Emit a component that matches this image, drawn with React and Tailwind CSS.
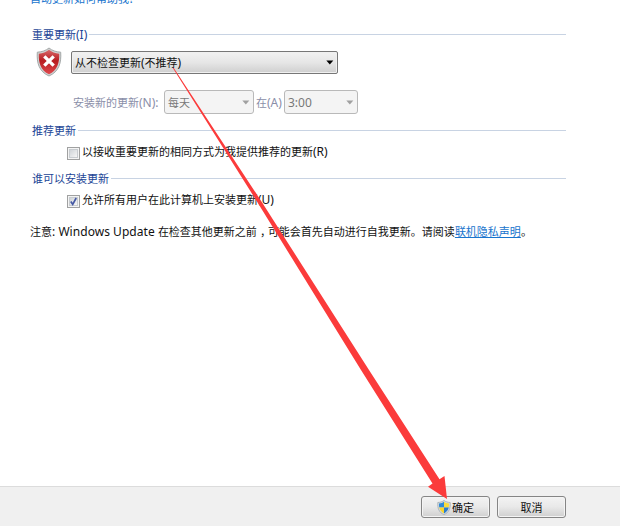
import React, { useState } from 'react';

// Latin glyphs run slightly larger than the Chinese ones
const En = ({ children }) => <span className="text-[12px]">{children}</span>;

function Section({ title }) {
    return (
        <div className="flex h-4 w-[534px] items-center gap-[2px] text-[#1c4596]">
            <span className="pt-[2px] whitespace-nowrap">{title}</span>
            <div className="h-px flex-1 bg-[#c8d3e3]"></div>
        </div>
    );
}

function Caret({ className }) {
    return (
        <svg className={className} width="8" height="5" viewBox="0 0 8 5" fill="currentColor">
            <path d="M0.3 0.5h7L3.8 4.6z" />
        </svg>
    );
}

function DisabledSelect({ className, children }) {
    return (
        <div className={`flex h-[24px] items-center justify-between rounded-[3px] border border-[#b9b9b9] bg-[#f4f4f4] px-[3px] text-[#787878] ${className}`}>
            <span className="pt-px">{children}</span>
            <Caret className="text-[#a0a0a0]" />
        </div>
    );
}

function Checkbox({ checked, onChange, children }) {
    return (
        <label className="flex h-4 items-center gap-[2px] whitespace-nowrap">
            <input type="checkbox" className="sr-only" checked={checked} onChange={onChange} />
            <span className="mt-[3px] flex h-[13px] w-[13px] items-center justify-center border border-[#a0a1a1] bg-[#f4f4f4] p-px">
                <span className="flex h-full w-full items-center justify-center border border-[#c8ccd0] bg-linear-to-br from-[#d0d4d8] to-[#f6f6f6]">
                    {checked && (
                        <svg className="shrink-0" width="9" height="9" viewBox="0 0 9 9" fill="none" stroke="#4659a4" strokeWidth="1.7">
                            <path d="M1.8 4.6L3.7 7.3L7.2 1" />
                        </svg>
                    )}
                </span>
            </span>
            <span>{children}</span>
        </label>
    );
}

function Button({ children }) {
    return (
        <button className="flex h-[22px] w-[69px] items-center justify-center rounded-[3px] border border-[#858585] bg-linear-to-b from-[#f3f3f3] from-0% via-[#e9e9e9] via-48% to-[#cfcfcf] to-100% shadow-[inset_0_0_0_1px_#f4f4f4]">
            {children}
        </button>
    );
}

function ErrorShield() {
    return (
        <svg width="26" height="30" viewBox="0 0 26 30">
            <defs>
                <linearGradient id="red" x1="0" y1="0" x2="0" y2="1">
                    <stop offset="0" stopColor="#d8696b" />
                    <stop offset="0.45" stopColor="#b81c20" />
                    <stop offset="1" stopColor="#e04a4e" />
                </linearGradient>
            </defs>
            <path d="M13 1C10 3.5 6 5 1.3 5.2C0.6 16 3 24.5 13 29C23 24.5 25.4 16 24.7 5.2C20 5 16 3.5 13 1z" fill="#cfd3d3" stroke="#a4a8a8" strokeWidth="1" />
            <path d="M13 2.8C10 5.1 7 6.3 2.8 6.7C2.5 16 4.7 23.2 13 27.3C21.3 23.2 23.5 16 23.2 6.7C19 6.3 16 5.1 13 2.8z" fill="url(#red)" />
            <path d="M8.3 9.3L17.7 18.7M17.7 9.3L8.3 18.7" stroke="#fff" strokeWidth="3.3" />
        </svg>
    );
}

function UacShield() {
    return (
        <svg width="14" height="15" viewBox="0 0 14 15">
            <defs>
                <clipPath id="uac">
                    <path d="M7 1.8C5.5 2.8 4 3.3 2 3.5C1.8 8 3 11.5 7 13.4C11 11.5 12.2 8 12 3.5C10 3.3 8.5 2.8 7 1.8z" />
                </clipPath>
            </defs>
            <path d="M7 0.5C5.3 1.7 3.2 2.4 0.8 2.5C0.4 8 1.8 12.5 7 14.6C12.2 12.5 13.6 8 13.2 2.5C10.8 2.4 8.7 1.7 7 0.5z" fill="#d5dde2" stroke="#9aa3a9" strokeWidth="0.7" />
            <g clipPath="url(#uac)">
                <path d="M0 0h7v7.5H0z" fill="#2f8ad8" />
                <path d="M7 0h7v7.5H7z" fill="#f9dc3c" />
                <path d="M0 7.5h7V15H0z" fill="#f9d52c" />
                <path d="M7 7.5h7V15H7z" fill="#2b7ccc" />
            </g>
        </svg>
    );
}

export default function App() {
    const [recommended, setRecommended] = useState(false);
    const [allUsers, setAllUsers] = useState(true);

    return (
        <div className="relative flex h-[526px] w-[620px] flex-col overflow-hidden bg-white font-['Noto_Sans','Noto_Sans_CJK_SC',sans-serif] text-[11px] leading-4 text-[#111]">
            <div className="flex flex-1 flex-col pl-8">
                <div className="-mt-[9px] -ml-[2px] h-4 text-[#1874cd]">
                    自动更新如何帮助我<En>?</En>
                </div>

                <div className="mt-[19px]">
                    <Section title={<>重要更新<En>(I)</En></>} />
                </div>
                <div className="mt-[5px] ml-[4px] flex h-[30px] items-center gap-[9px]">
                    <ErrorShield />
                    <div className="flex h-[23px] w-[267px] items-center justify-between rounded-[2px] border border-[#777] bg-linear-to-b from-[#f2f2f2] from-0% via-[#e6e6e6] via-50% to-[#cfcfcf] to-100% px-[3px] shadow-[inset_0_0_0_1px_#f0f0f0]">
                        <span className="pt-px">从不检查更新<En>(</En>不推荐<En>)</En></span>
                        <Caret className="text-black" />
                    </div>
                </div>
                <div className="mt-[13px] ml-[41px] flex items-center text-[#8a8ea8]">
                    <span className="w-[91px] pt-px whitespace-nowrap">安装新的更新<En>(N):</En></span>
                    <DisabledSelect className="w-[90px]">每天</DisabledSelect>
                    <span className="w-[30px] pt-px pl-[2px] whitespace-nowrap">在<En>(A)</En></span>
                    <DisabledSelect className="w-[74px]"><En>3:00</En></DisabledSelect>
                </div>

                <div className="mt-[8px]">
                    <Section title="推荐更新" />
                </div>
                <div className="mt-[6px] ml-[35px]">
                    <Checkbox checked={recommended} onChange={() => setRecommended(!recommended)}>
                        以接收重要更新的相同方式为我提供推荐的更新<En>(R)</En>
                    </Checkbox>
                </div>

                <div className="mt-[10px]">
                    <Section title="谁可以安装更新" />
                </div>
                <div className="mt-[6px] ml-[35px]">
                    <Checkbox checked={allUsers} onChange={() => setAllUsers(!allUsers)}>
                        允许所有用户在此计算机上安装更新<En>(U)</En>
                    </Checkbox>
                </div>

                <div className="mt-[16px] -ml-[2px] whitespace-nowrap">
                    注意<span className="text-[12px] tracking-[0.04px]">: Windows Update </span>在检查其他更新之前<span className="inline-block w-[11px] pl-[3px]">，</span>可能会首先自动进行自我更新。请阅读
                    <a href="#" className="text-[#1874cd] underline">联机隐私声明</a>。
                </div>
            </div>

            <div className="flex h-[40px] gap-[7px] border-t border-[#dcdcdc] bg-[#f0f0f0] pt-[9px] pl-[421px]">
                <Button>
                    <UacShield />
                    <span className="ml-px pt-px">确定</span>
                </Button>
                <Button><span className="pt-px">取消</span></Button>
            </div>

            {/* arrow pointing at the OK button */}
            <svg className="pointer-events-none absolute inset-0" width="620" height="526" viewBox="0 0 620 526">
                <path d="M172.8 68L173.8 68L260.5 200L369 370L439.5 479.3L444.5 476L447 499L428 486.7L432.5 483.5L361 370L256 200z" fill="#fb3b3b" />
            </svg>
        </div>
    );
}
